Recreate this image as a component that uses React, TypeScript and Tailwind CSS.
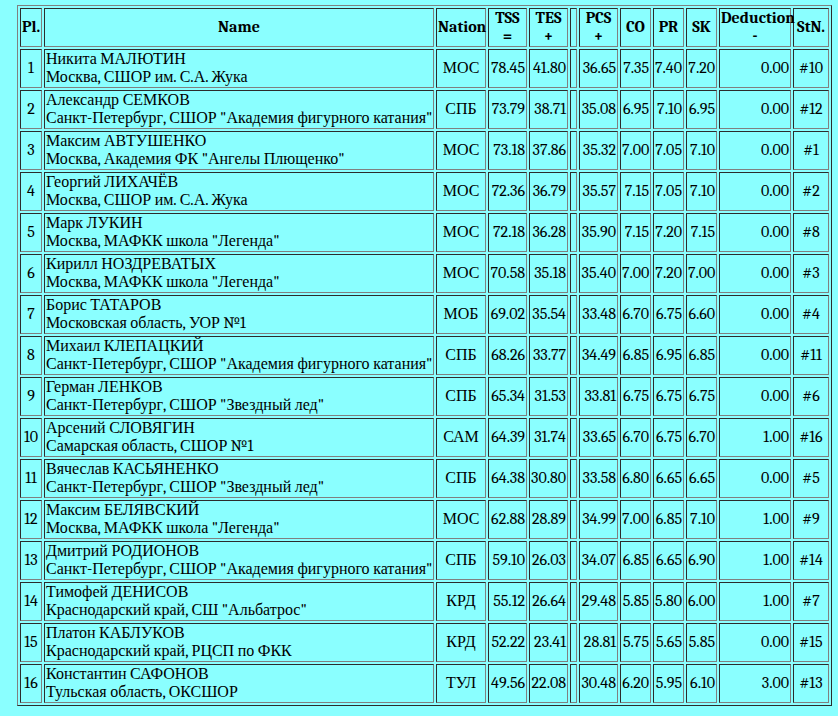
import React from "react";

type Row = {
  pl: number;
  name: string;
  club: string;
  nation: string;
  tss: string;
  tes: string;
  pcs: string;
  co: string;
  pr: string;
  sk: string;
  ded: string;
  stn: string;
};

const rows: Row[] = [
  { pl: 1, name: "Никита МАЛЮТИН", club: "Москва, СШОР им. С.А. Жука", nation: "МОС", tss: "78.45", tes: "41.80", pcs: "36.65", co: "7.35", pr: "7.40", sk: "7.20", ded: "0.00", stn: "#10" },
  { pl: 2, name: "Александр СЕМКОВ", club: "Санкт-Петербург, СШОР \"Академия фигурного катания\"", nation: "СПБ", tss: "73.79", tes: "38.71", pcs: "35.08", co: "6.95", pr: "7.10", sk: "6.95", ded: "0.00", stn: "#12" },
  { pl: 3, name: "Максим АВТУШЕНКО", club: "Москва, Академия ФК \"Ангелы Плющенко\"", nation: "МОС", tss: "73.18", tes: "37.86", pcs: "35.32", co: "7.00", pr: "7.05", sk: "7.10", ded: "0.00", stn: "#1" },
  { pl: 4, name: "Георгий ЛИХАЧЁВ", club: "Москва, СШОР им. С.А. Жука", nation: "МОС", tss: "72.36", tes: "36.79", pcs: "35.57", co: "7.15", pr: "7.05", sk: "7.10", ded: "0.00", stn: "#2" },
  { pl: 5, name: "Марк ЛУКИН", club: "Москва, МАФКК школа \"Легенда\"", nation: "МОС", tss: "72.18", tes: "36.28", pcs: "35.90", co: "7.15", pr: "7.20", sk: "7.15", ded: "0.00", stn: "#8" },
  { pl: 6, name: "Кирилл НОЗДРЕВАТЫХ", club: "Москва, МАФКК школа \"Легенда\"", nation: "МОС", tss: "70.58", tes: "35.18", pcs: "35.40", co: "7.00", pr: "7.20", sk: "7.00", ded: "0.00", stn: "#3" },
  { pl: 7, name: "Борис ТАТАРОВ", club: "Московская область, УОР №1", nation: "МОБ", tss: "69.02", tes: "35.54", pcs: "33.48", co: "6.70", pr: "6.75", sk: "6.60", ded: "0.00", stn: "#4" },
  { pl: 8, name: "Михаил КЛЕПАЦКИЙ", club: "Санкт-Петербург, СШОР \"Академия фигурного катания\"", nation: "СПБ", tss: "68.26", tes: "33.77", pcs: "34.49", co: "6.85", pr: "6.95", sk: "6.85", ded: "0.00", stn: "#11" },
  { pl: 9, name: "Герман ЛЕНКОВ", club: "Санкт-Петербург, СШОР \"Звездный лед\"", nation: "СПБ", tss: "65.34", tes: "31.53", pcs: "33.81", co: "6.75", pr: "6.75", sk: "6.75", ded: "0.00", stn: "#6" },
  { pl: 10, name: "Арсений СЛОВЯГИН", club: "Самарская область, СШОР №1", nation: "САМ", tss: "64.39", tes: "31.74", pcs: "33.65", co: "6.70", pr: "6.75", sk: "6.70", ded: "1.00", stn: "#16" },
  { pl: 11, name: "Вячеслав КАСЬЯНЕНКО", club: "Санкт-Петербург, СШОР \"Звездный лед\"", nation: "СПБ", tss: "64.38", tes: "30.80", pcs: "33.58", co: "6.80", pr: "6.65", sk: "6.65", ded: "0.00", stn: "#5" },
  { pl: 12, name: "Максим БЕЛЯВСКИЙ", club: "Москва, МАФКК школа \"Легенда\"", nation: "МОС", tss: "62.88", tes: "28.89", pcs: "34.99", co: "7.00", pr: "6.85", sk: "7.10", ded: "1.00", stn: "#9" },
  { pl: 13, name: "Дмитрий РОДИОНОВ", club: "Санкт-Петербург, СШОР \"Академия фигурного катания\"", nation: "СПБ", tss: "59.10", tes: "26.03", pcs: "34.07", co: "6.85", pr: "6.65", sk: "6.90", ded: "1.00", stn: "#14" },
  { pl: 14, name: "Тимофей ДЕНИСОВ", club: "Краснодарский край, СШ \"Альбатрос\"", nation: "КРД", tss: "55.12", tes: "26.64", pcs: "29.48", co: "5.85", pr: "5.80", sk: "6.00", ded: "1.00", stn: "#7" },
  { pl: 15, name: "Платон КАБЛУКОВ", club: "Краснодарский край, РЦСП по ФКК", nation: "КРД", tss: "52.22", tes: "23.41", pcs: "28.81", co: "5.75", pr: "5.65", sk: "5.85", ded: "0.00", stn: "#15" },
  { pl: 16, name: "Константин САФОНОВ", club: "Тульская область, ОКСШОР", nation: "ТУЛ", tss: "49.56", tes: "22.08", pcs: "30.48", co: "6.20", pr: "5.95", sk: "6.10", ded: "3.00", stn: "#13" },
];

const cell = "border border-[#808080] [border-style:inset] p-px whitespace-nowrap align-middle";

function Th({ w, children }: { w: string; children: React.ReactNode }) {
  return <th className={cell + " font-bold text-center " + w}>{children}</th>;
}

export default function App() {
  return (
    <div className="min-h-[716px] bg-[#8affff] pt-[5px] pl-[17px] text-black text-[16px] leading-[17.5px] font-serif">
      <table className="w-[815px] table-fixed border border-[#808080] [border-style:outset] border-separate border-spacing-[2px]">
        <thead>
          <tr>
            <Th w="w-[22px]">Pl.</Th>
            <Th w="w-[390px]">Name</Th>
            <Th w="w-[50px]">Nation</Th>
            <Th w="w-[39px]">TSS<br />=</Th>
            <Th w="w-[39px]">TES<br />+</Th>
            <Th w="w-[7px]">&nbsp;</Th>
            <Th w="w-[39px]">PCS<br />+</Th>
            <Th w="w-[31px]">CO</Th>
            <Th w="w-[31px]">PR</Th>
            <Th w="w-[31px]">SK</Th>
            <Th w="w-[72px]">Deduction<br />-</Th>
            <Th w="w-[36px]">StN.</Th>
          </tr>
        </thead>
        <tbody>
          {rows.map((r) => (
            <tr key={r.pl}>
              <td className={cell + " text-center"}>{r.pl}</td>
              <td className={cell + " text-left"}>
                {r.name}
                <br />
                {r.club}
              </td>
              <td className={cell + " text-center"}>{r.nation}</td>
              <td className={cell + " text-right"}>{r.tss}</td>
              <td className={cell + " text-right"}>{r.tes}</td>
              <td className={cell}>&nbsp;</td>
              <td className={cell + " text-right"}>{r.pcs}</td>
              <td className={cell + " text-right"}>{r.co}</td>
              <td className={cell + " text-right"}>{r.pr}</td>
              <td className={cell + " text-right"}>{r.sk}</td>
              <td className={cell + " text-right"}>{r.ded}</td>
              <td className={cell + " text-center"}>{r.stn}</td>
            </tr>
          ))}
        </tbody>
      </table>
    </div>
  );
}
